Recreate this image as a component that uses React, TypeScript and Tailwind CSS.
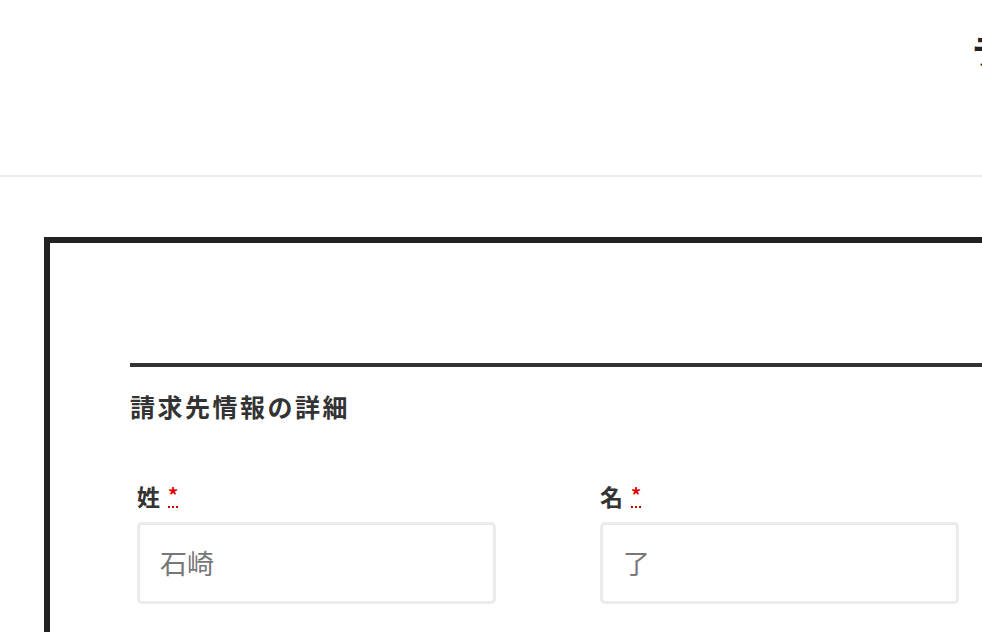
import React from 'react';

const font = { fontFamily: '"Noto Sans CJK JP", "Noto Sans", sans-serif' };

function Field({ label, value }: { label: string; value: string }) {
  return (
    <div className="flex w-[359px] flex-col">
      <label className="flex items-start gap-[8px] text-[23px] font-bold leading-[30px] text-[#333]">
        {label}
        <abbr
          title="必須"
          className="mt-[3px] text-[20px] font-bold leading-[22px] text-[#e00000] no-underline border-b-2 border-dotted border-[#c00]"
        >
          *
        </abbr>
      </label>
      <div className="mt-[11px] flex h-[82px] items-center rounded-[5px] border-[3px] border-[#ebebeb] bg-white px-[20px] text-[27px] text-[#777]">
        {value}
      </div>
    </div>
  );
}

export default function App() {
  return (
    <div className="h-[632px] w-[982px] overflow-hidden bg-white" style={font}>
      <header className="relative h-[177px] overflow-hidden border-b-2 border-[#ebebeb]">
        <span className="absolute left-[970px] top-[24px] text-[36px] font-bold leading-[52px] text-[#222]">
          ラ
        </span>
      </header>
      <div className="pl-[44px] pt-[60px]">
        <div className="h-[500px] w-[1000px] border-l-[6px] border-t-[6px] border-[#222] pl-[80px] pt-[120px]">
          <div className="h-[4px] w-full bg-[#333]" />
          <h2 className="mt-[22px] text-[25px] font-bold leading-[34px] tracking-[0.1em] text-[#333]">
            請求先情報の詳細
          </h2>
          <div className="mt-[58px] flex gap-[104px] pl-[7px]">
            <Field label="姓" value="石崎" />
            <Field label="名" value="了" />
          </div>
        </div>
      </div>
    </div>
  );
}
